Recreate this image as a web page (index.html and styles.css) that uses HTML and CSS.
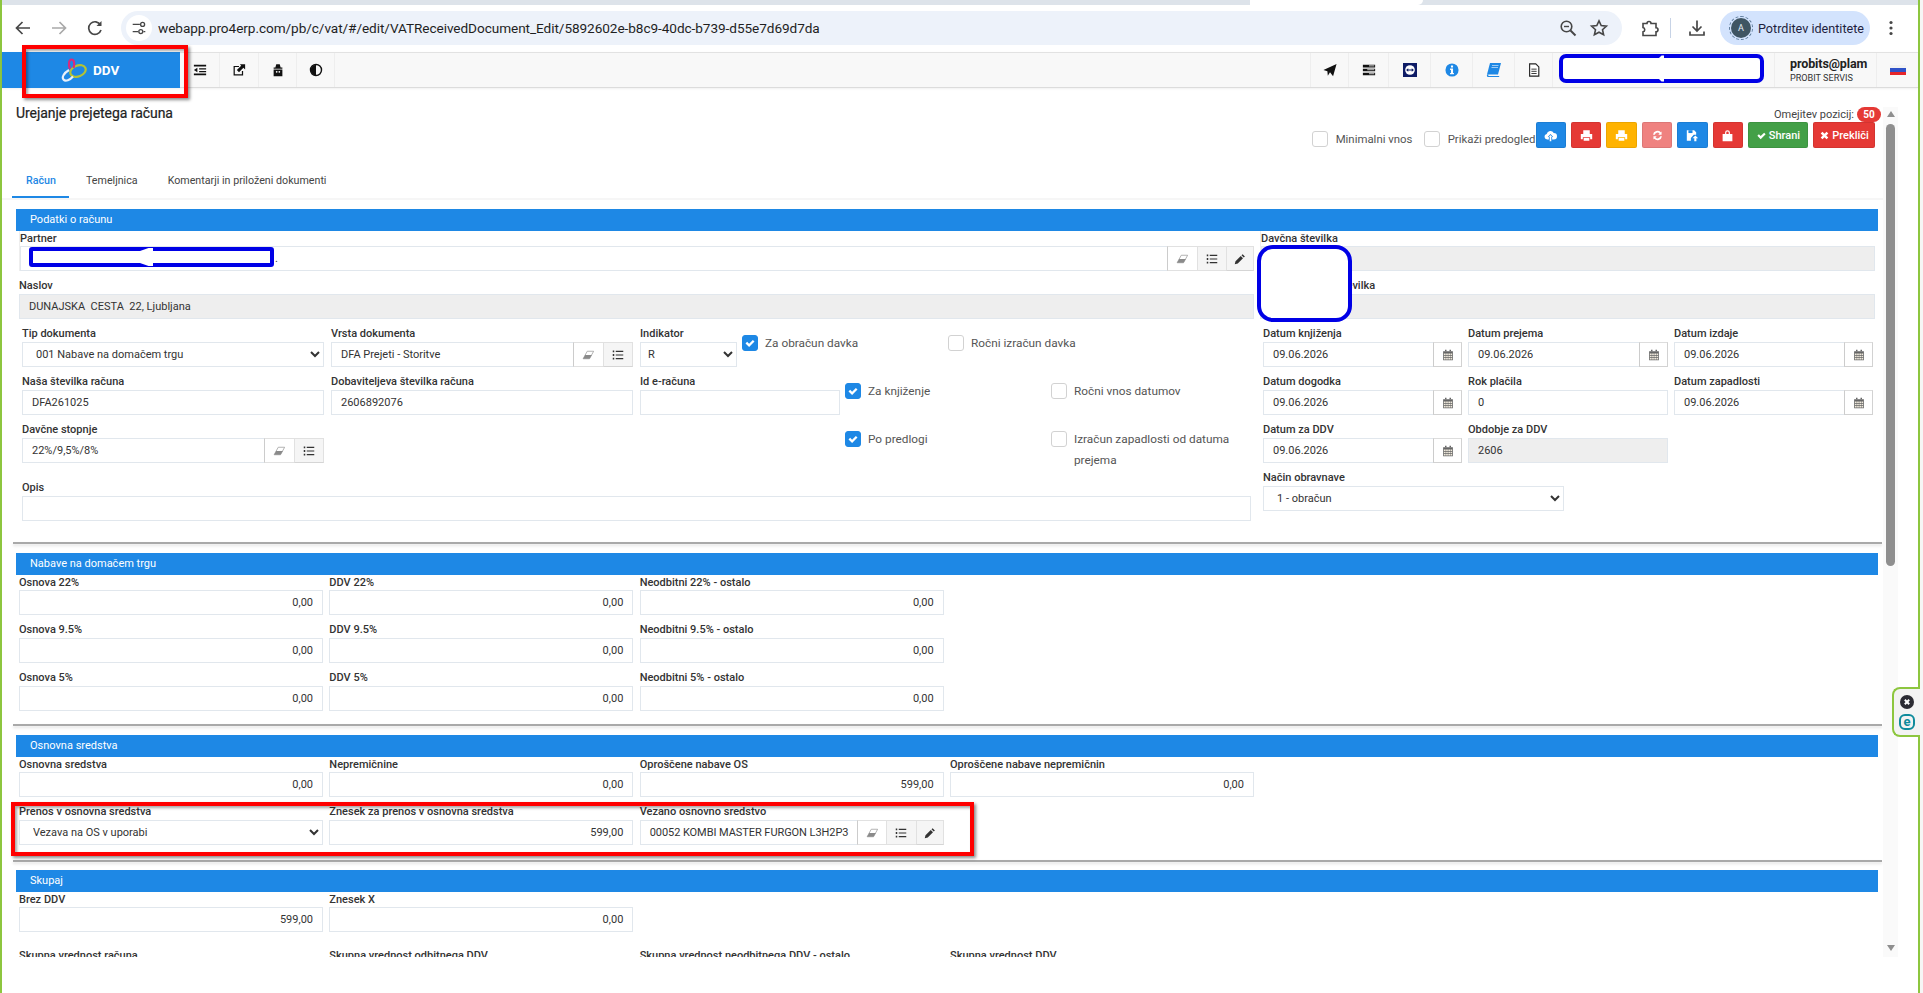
FILE: index.html
```html
<!DOCTYPE html>
<html lang="sl">
<head>
<meta charset="utf-8">
<title>Urejanje prejetega računa</title>
<link rel="stylesheet" href="styles.css">
</head>
<body>
<svg class="defs" width="0" height="0" aria-hidden="true">
  <symbol id="i-eraser" viewBox="0 0 16 16"><path d="M7 3h8.500L10 13H1.500z" fill="#fff" stroke="#9a9a9a"/><path d="M4.200 8h9L10 13H1.500z" fill="#8a8a8a"/></symbol>
  <symbol id="i-list" viewBox="0 0 16 16"><path d="M1 2h2v2.400H1zM5 2.400h10v1.600H5zM1 6.800h2v2.400H1zM5 7.200h10v1.600H5zM1 11.600h2V14H1zM5 12h10v1.600H5z" fill="#333"/></symbol>
  <symbol id="i-pencil" viewBox="0 0 16 16"><path d="M11.500 1.500l3 3-1.500 1.500-3-3zM9 4l3 3-7 7-4 1 1-4z" fill="#333"/></symbol>
  <symbol id="i-cal" viewBox="0 0 16 16"><path d="M4 1h2v2H4zM10 1h2v2h-2z" fill="#666"/><path d="M1.500 3h13v12h-13z" fill="#666"/><path d="M2.500 6h2.400v2H2.500zM5.500 6h2.300v2H5.500zM8.400 6h2.300v2H8.400zM11.300 6h2.200v2h-2.200zM2.500 9h2.400v2H2.500zM5.500 9h2.300v2H5.500zM8.400 9h2.300v2H8.400zM11.300 9h2.200v2h-2.200zM2.500 12h2.400v2H2.500zM5.500 12h2.300v2H5.500zM8.400 12h2.300v2H8.400zM11.300 12h2.200v2h-2.200z" fill="#efe9dc"/></symbol>
  <symbol id="i-cloud" viewBox="0 0 16 16"><path d="M4 13A3.500 3.500 0 0 1 3.300 6.100 4.700 4.700 0 0 1 12 5a4 4 0 0 1 0 8h-2V9.800h1.400L8 6 4.600 9.800H6V13z" fill="#fff"/><path d="M8 7.500l2 2.200H9V15H7V9.700H6z" fill="#fff"/></symbol>
  <symbol id="i-print" viewBox="0 0 16 16"><path d="M4 1.500h8V6H4zM1 6h14v6.500h-2.500V10h-9v2.500H1zM4.500 11h7v3.500h-7z" fill="#fff"/></symbol>
  <symbol id="i-sync" viewBox="0 0 16 16"><path d="M13 3v4H9l1.500-1.500A3.500 3.500 0 0 0 4.600 7H2.500A5.500 5.500 0 0 1 12 4zM3 13V9h4l-1.500 1.500A3.500 3.500 0 0 0 11.400 9h2.100A5.500 5.500 0 0 1 4 12z" fill="#fff"/></symbol>
  <symbol id="i-saveup" viewBox="0 0 16 16"><path d="M1 1.500h9l2.500 2.500v3H9.500L6 11v3.500H1z" fill="#fff"/><path d="M3 1.500h5V5H3z" fill="#1e88e5"/><path d="M11.500 8l3.500 3.500h-2.200V15h-2.600v-3.500H8z" fill="#fff"/></symbol>
  <symbol id="i-lock" viewBox="0 0 16 16"><path d="M5 6V4.500a3 3 0 0 1 6 0V6h3v9H2V6zM6.500 6h3V4.500a1.500 1.500 0 0 0-3 0z" fill="#fff" fill-rule="evenodd"/></symbol>
  <symbol id="i-check" viewBox="0 0 16 16"><path d="M2 8.500l2.200-2.200 2.600 2.600 5-5L14 6.100l-7.200 7.200z" fill="#fff"/></symbol>
  <symbol id="i-times" viewBox="0 0 16 16"><path d="M2.500 5L5 2.500l3 3 3-3L13.500 5l-3 3 3 3-2.500 2.500-3-3-3 3L2.500 11l3-3z" fill="#fff"/></symbol>
</svg>

<div class="frame">
  <div class="strip"><span class="strip-tab"></span></div>
  <div class="browser">
    <div class="nav">
      <svg class="ci" viewBox="0 0 20 20"><path d="M17 10H4M9.500 4L3.500 10l6 6" fill="none" stroke="#474747" stroke-width="1.700"/></svg>
      <svg class="ci" viewBox="0 0 20 20"><path d="M3 10h13M10.500 4l6 6-6 6" fill="none" stroke="#a9a9a9" stroke-width="1.700"/></svg>
      <svg class="ci" viewBox="0 0 20 20"><path d="M15.500 7A6.300 6.300 0 1 0 16 12" fill="none" stroke="#474747" stroke-width="1.700"/><path d="M16.500 3v5h-5z" fill="#474747"/></svg>
    </div>
    <div class="url">
      <span class="site-info"><svg viewBox="0 0 20 20" width="18" height="18"><path d="M3 6h8M15 14h2M3 14h6" stroke="#474747" stroke-width="1.600" fill="none"/><circle cx="14" cy="6" r="2.200" fill="none" stroke="#474747" stroke-width="1.500"/><circle cx="12" cy="14" r="2.200" fill="none" stroke="#474747" stroke-width="1.500"/></svg></span>
      <span class="url-text">webapp.pro4erp.com/pb/c/vat/#/edit/VATReceivedDocument_Edit/5892602e-b8c9-40dc-b739-d55e7d69d7da</span>
      <svg class="ci url-zoom" viewBox="0 0 20 20"><circle cx="8.500" cy="8.500" r="5.300" fill="none" stroke="#474747" stroke-width="1.600"/><path d="M12.500 12.500l5 5" stroke="#474747" stroke-width="2"/><path d="M6 8.500h5" stroke="#474747" stroke-width="1.400"/></svg>
      <svg class="ci url-star" viewBox="0 0 20 20"><path d="M10 2.800l2.200 4.800 5.200.6-3.900 3.500 1.100 5.100L10 14.200l-4.600 2.600 1.100-5.100L2.600 8.200l5.200-.6z" fill="none" stroke="#474747" stroke-width="1.600"/></svg>
    </div>
    <svg class="ci ext" viewBox="0 0 20 20"><path d="M3 5.500h4a2 2 0 0 1 4 0h5v4.200a2 2 0 0 1 0 4V17.500H3v-3.700a2.200 2.200 0 0 0 0-4.300z" fill="none" stroke="#474747" stroke-width="1.600"/></svg>
    <span class="sep"></span>
    <svg class="ci dl" viewBox="0 0 20 20"><path d="M10 2.500V12M5.500 8.500L10 13l4.500-4.500M3 13.500v3.500h14v-3.500" fill="none" stroke="#474747" stroke-width="1.700"/></svg>
    <div class="profile"><span class="avatar">A</span><span>Potrditev identitete</span></div>
    <svg class="ci kebab" viewBox="0 0 20 20"><circle cx="10" cy="4.500" r="1.600" fill="#474747"/><circle cx="10" cy="10" r="1.600" fill="#474747"/><circle cx="10" cy="15.500" r="1.600" fill="#474747"/></svg>
  </div>

  <header class="appbar">
    <div class="brand">
      <svg class="logo" viewBox="0 0 26 24" width="26" height="24"><ellipse cx="17" cy="13" rx="8" ry="5.500" transform="rotate(-22 17 13)" fill="none" stroke="#b5c334" stroke-width="2.200"/><path d="M9 11C7 6 8 1.500 10.500 1.500S14 5 12.500 10" fill="none" stroke="#d92a7e" stroke-width="2.200"/><path d="M8 12C3 15 0.500 19 2.500 21.500S9 22 12 18.500" fill="none" stroke="#e8f1fb" stroke-width="2.200"/></svg>
      <span>DDV</span>
    </div>
    <div class="cell c40"><svg class="ti" viewBox="0 0 16 16"><path d="M1 2h14v2H1zM7 6h8v1.500H7zM7 9h8v1.500H7zM1 12h14v2H1zM5 5.500v5L1 8z" fill="#111"/></svg></div>
    <div class="cell c39"><svg class="ti" viewBox="0 0 16 16"><path d="M12 9v4.500H2.500V4H8" fill="none" stroke="#111" stroke-width="1.400"/><path d="M6 9l6-6M9 1.500h6V7.500l-2-2-5 5-2.500-2.500 5-5z" fill="#111"/></svg></div>
    <div class="cell c38"><svg class="ti" viewBox="0 0 16 16"><path d="M5 5l1-3.500h4L11 5h2v1.500H3V5zM3 7.500h10V15H3z" fill="#111"/><circle cx="6.500" cy="10" r="1" fill="#fff"/><circle cx="9.500" cy="10" r="1" fill="#fff"/></svg></div>
    <div class="cell c38"><svg class="ti" viewBox="0 0 16 16"><circle cx="8" cy="8" r="6.300" fill="none" stroke="#111" stroke-width="1.600"/><path d="M8 2a6 6 0 0 0 0 12z" fill="#111"/></svg></div>
    <div class="grow"></div>
    <div class="cell c39 first"><svg class="ti" viewBox="0 0 16 16"><path d="M15.500 1L11.500 15 8 10.500 5.500 14.500 5 9.500 0.500 8z" fill="#111"/></svg></div>
    <div class="cell c40"><svg class="ti" viewBox="0 0 16 16"><path d="M1 2h14v3H1zM1 6.500h14v3H1zM1 11h14v3H1z" fill="#111"/><path d="M8 3.300h6M6 7.700h8M8 12.300h6" stroke="#fff" stroke-width=".9"/></svg></div>
    <div class="cell c42"><svg class="ti" viewBox="0 0 16 16"><rect width="16" height="16" fill="#0e1c66"/><circle cx="8" cy="8" r="5.500" fill="#fff"/><path d="M3.500 8l2.500-2v1.300h4V6l2.500 2-2.500 2V8.700h-4V10z" fill="#0e1c66"/></svg></div>
    <div class="cell c42"><svg class="ti" viewBox="0 0 16 16"><circle cx="8" cy="8" r="7.500" fill="#1e88e5"/><path d="M6.800 2.800h2.400V5H6.800zM5.800 6.400h3.400v5h1v1.500H5.800v-1.500h1V7.900h-1z" fill="#fff"/></svg></div>
    <div class="cell c42"><svg class="ti book" viewBox="0 0 16 16"><path d="M4 1h11L12 12.500H1z" fill="#1e88e5"/><path d="M1 12.500c-.5 2 .5 2.500 1.500 2.500h10.300l.7-1H3c-1 0-1-1 -.3-1.500z" fill="#1e88e5"/><path d="M6 3.500h6.500M5.500 5.500H12" stroke="#bfdcf7" stroke-width=".8"/></svg></div>
    <div class="cell c38"><svg class="ti" viewBox="0 0 16 16"><path d="M3 1h7l3.500 3.500V15H3z" fill="#fff" stroke="#222" stroke-width="1.300"/><path d="M5 7h6M5 9.500h6M5 12h6" stroke="#222" stroke-width="1"/></svg></div>
    <div class="cell c222"></div>
    <div class="cell user"><strong>probits@plam</strong><small>PROBIT SERVIS</small></div>
    <div class="flag-cell"><span class="flag"></span></div>
  </header>

  <div class="workspace">
    <main class="content">
      <div class="head">
        <h1>Urejanje prejetega računa</h1>
        <div class="head-right">
          <div class="limit"><span>Omejitev pozicij:</span><b class="badge">50</b></div>
          <div class="controls">
            <label class="hc"><span class="box"></span><span>Minimalni vnos</span></label>
            <label class="hc hc2"><span class="box"></span><span>Prikaži predogled</span></label>
            <div class="btns">
              <button class="btn blue"><svg class="bi"><use href="#i-cloud"/></svg></button>
              <button class="btn red"><svg class="bi"><use href="#i-print"/></svg></button>
              <button class="btn amber"><svg class="bi"><use href="#i-print"/></svg></button>
              <button class="btn salmon"><svg class="bi"><use href="#i-sync"/></svg></button>
              <button class="btn blue"><svg class="bi"><use href="#i-saveup"/></svg></button>
              <button class="btn red"><svg class="bi"><use href="#i-lock"/></svg></button>
              <button class="btn green wide"><svg class="bs"><use href="#i-check"/></svg>Shrani</button>
              <button class="btn red wider"><svg class="bs"><use href="#i-times"/></svg>Prekliči</button>
            </div>
          </div>
        </div>
      </div>

      <nav class="tabs">
        <a class="tab active">Račun</a>
        <a class="tab">Temeljnica</a>
        <a class="tab">Komentarji in priloženi dokumenti</a>
      </nav>

      <section class="section s1">
        <div class="bar">Podatki o računu</div>
        <div class="top">
          <div class="top-left">
            <div class="f first">
              <div class="lb">Partner</div>
              <div class="group"><div class="in partner">.</div>
                <span class="add plain"><svg class="ai"><use href="#i-eraser"/></svg></span><span class="add"><svg class="ai"><use href="#i-list"/></svg></span><span class="add last pen"><svg class="ai"><use href="#i-pencil"/></svg></span></div>
            </div>
            <div class="f">
              <div class="lb">Naslov</div>
              <div class="in ro">DUNAJSKA&nbsp; CESTA&nbsp; 22, Ljubljana</div>
            </div>
            <div class="row">
              <div class="f w302"><div class="lb">Tip dokumenta</div>
                <select class="sel"><option>001 Nabave na domačem trgu</option></select></div>
              <div class="f w302"><div class="lb">Vrsta dokumenta</div>
                <div class="group"><div class="in">DFA Prejeti - Storitve</div><span class="add plain"><svg class="ai"><use href="#i-eraser"/></svg></span><span class="add last"><svg class="ai"><use href="#i-list"/></svg></span></div></div>
              <div class="f w97"><div class="lb">Indikator</div>
                <select class="sel sel-s"><option>R</option></select></div>
              <label class="ck"><span class="box on"><svg viewBox="0 0 16 16"><use href="#i-check"/></svg></span><span>Za obračun davka</span></label>
              <label class="ck"><span class="box"></span><span>Ročni izračun davka</span></label>
            </div>
            <div class="row">
              <div class="f w302"><div class="lb">Naša številka računa</div><div class="in">DFA261025</div></div>
              <div class="f w302"><div class="lb">Dobaviteljeva številka računa</div><div class="in">2606892076</div></div>
              <div class="f w200"><div class="lb">Id e-računa</div><div class="in"></div></div>
              <label class="ck"><span class="box on"><svg viewBox="0 0 16 16"><use href="#i-check"/></svg></span><span>Za knjiženje</span></label>
              <label class="ck"><span class="box"></span><span>Ročni vnos datumov</span></label>
            </div>
            <div class="row">
              <div class="f w302"><div class="lb">Davčne stopnje</div>
                <div class="group"><div class="in">22%/9,5%/8%</div><span class="add plain"><svg class="ai"><use href="#i-eraser"/></svg></span><span class="add last"><svg class="ai"><use href="#i-list"/></svg></span></div></div>
              <div class="f w302"></div>
              <div class="f w200"></div>
              <label class="ck"><span class="box on"><svg viewBox="0 0 16 16"><use href="#i-check"/></svg></span><span>Po predlogi</span></label>
              <label class="ck"><span class="box"></span><span>Izračun zapadlosti od datuma prejema</span></label>
            </div>
            <div class="f opis"><div class="lb">Opis</div><div class="in"></div></div>
          </div>
          <div class="top-right">
            <div class="f first"><div class="lb">Davčna številka</div><div class="in ro"></div></div>
            <div class="f"><div class="lb">Identifikacijska številka</div><div class="in ro"></div></div>
            <div class="row dates">
              <div class="f d1"><div class="lb">Datum knjiženja</div><div class="group"><div class="in">09.06.2026</div><span class="add cal"><svg class="ai"><use href="#i-cal"/></svg></span></div></div>
              <div class="f d2"><div class="lb">Datum prejema</div><div class="group"><div class="in">09.06.2026</div><span class="add cal"><svg class="ai"><use href="#i-cal"/></svg></span></div></div>
              <div class="f d3"><div class="lb">Datum izdaje</div><div class="group"><div class="in">09.06.2026</div><span class="add cal"><svg class="ai"><use href="#i-cal"/></svg></span></div></div>
            </div>
            <div class="row dates">
              <div class="f d1"><div class="lb">Datum dogodka</div><div class="group"><div class="in">09.06.2026</div><span class="add cal"><svg class="ai"><use href="#i-cal"/></svg></span></div></div>
              <div class="f d2"><div class="lb">Rok plačila</div><div class="in">0</div></div>
              <div class="f d3"><div class="lb">Datum zapadlosti</div><div class="group"><div class="in">09.06.2026</div><span class="add cal"><svg class="ai"><use href="#i-cal"/></svg></span></div></div>
            </div>
            <div class="row dates">
              <div class="f d1"><div class="lb">Datum za DDV</div><div class="group"><div class="in">09.06.2026</div><span class="add cal"><svg class="ai"><use href="#i-cal"/></svg></span></div></div>
              <div class="f d2"><div class="lb">Obdobje za DDV</div><div class="in ro">2606</div></div>
            </div>
            <div class="row dates">
              <div class="f nacin"><div class="lb">Način obravnave</div><select class="sel"><option>1 - obračun</option></select></div>
            </div>
          </div>
        </div>
      </section>
      <hr class="rule">

      <section class="section s2">
        <div class="bar">Nabave na domačem trgu</div>
        <div class="grid first-row">
          <div class="f"><div class="lb">Osnova 22%</div><div class="in num">0,00</div></div>
          <div class="f"><div class="lb">DDV 22%</div><div class="in num">0,00</div></div>
          <div class="f"><div class="lb">Neodbitni 22% - ostalo</div><div class="in num">0,00</div></div>
        </div>
        <div class="grid">
          <div class="f"><div class="lb">Osnova 9.5%</div><div class="in num">0,00</div></div>
          <div class="f"><div class="lb">DDV 9.5%</div><div class="in num">0,00</div></div>
          <div class="f"><div class="lb">Neodbitni 9.5% - ostalo</div><div class="in num">0,00</div></div>
        </div>
        <div class="grid">
          <div class="f"><div class="lb">Osnova 5%</div><div class="in num">0,00</div></div>
          <div class="f"><div class="lb">DDV 5%</div><div class="in num">0,00</div></div>
          <div class="f"><div class="lb">Neodbitni 5% - ostalo</div><div class="in num">0,00</div></div>
        </div>
      </section>
      <hr class="rule">

      <section class="section s3">
        <div class="bar">Osnovna sredstva</div>
        <div class="grid first-row">
          <div class="f"><div class="lb">Osnovna sredstva</div><div class="in num">0,00</div></div>
          <div class="f"><div class="lb">Nepremičnine</div><div class="in num">0,00</div></div>
          <div class="f"><div class="lb">Oproščene nabave OS</div><div class="in num">599,00</div></div>
          <div class="f"><div class="lb">Oproščene nabave nepremičnin</div><div class="in num">0,00</div></div>
        </div>
        <div class="grid">
          <div class="f"><div class="lb">Prenos v osnovna sredstva</div><select class="sel sel-w"><option>Vezava na OS v uporabi</option></select></div>
          <div class="f"><div class="lb">Znesek za prenos v osnovna sredstva</div><div class="in num">599,00</div></div>
          <div class="f"><div class="lb">Vezano osnovno sredstvo</div>
            <div class="group"><div class="in tight">00052 KOMBI MASTER FURGON L3H2P3</div><span class="add plain"><svg class="ai"><use href="#i-eraser"/></svg></span><span class="add"><svg class="ai"><use href="#i-list"/></svg></span><span class="add last pen"><svg class="ai"><use href="#i-pencil"/></svg></span></div></div>
        </div>
      </section>
      <hr class="rule rule3">

      <section class="section s4">
        <div class="bar">Skupaj</div>
        <div class="grid first-row">
          <div class="f"><div class="lb">Brez DDV</div><div class="in num">599,00</div></div>
          <div class="f"><div class="lb">Znesek X</div><div class="in num">0,00</div></div>
        </div>
        <div class="grid after">
          <div class="f"><div class="lb">Skupna vrednost računa</div></div>
          <div class="f"><div class="lb">Skupna vrednost odbitnega DDV</div></div>
          <div class="f"><div class="lb">Skupna vrednost neodbitnega DDV - ostalo</div></div>
          <div class="f"><div class="lb">Skupna vrednost DDV</div></div>
        </div>
      </section>
    </main>
    <aside class="scroll">
      <span class="arrow up"></span>
      <span class="thumb"></span>
      <span class="arrow down"></span>
    </aside>
  </div>
</div>

<div class="eset">
  <svg viewBox="0 0 16 16" width="14" height="14"><circle cx="8" cy="8" r="8" fill="#2b2b33"/><path d="M4.700 6.300L6.300 4.700 8 6.400l1.700-1.700 1.600 1.600L9.600 8l1.700 1.700-1.600 1.600L8 9.600l-1.700 1.700-1.600-1.600L6.400 8z" fill="#fff"/></svg>
  <span class="eset-e">e</span>
</div>

<div class="mark red-frame brandmark"></div>
<div class="mark red-frame rowmark"></div>
<div class="mark blue-box usermask"><i class="wedge"></i></div>
<div class="mark blue-box partnermask"><i class="wedge"></i></div>
<div class="mark blue-box taxmask"></div>
</body>
</html>
```
FILE: styles.css
```css
* { box-sizing: border-box; }
html, body { margin: 0; padding: 0; }
body {
  position: relative;
  width: 1923px;
  height: 993px;
  overflow: hidden;
  background: #f6f6f6;
  font-family: Roboto, "Liberation Sans", sans-serif;
  font-size: 11px;
  color: #333;
}
.defs { position: absolute; }
.frame {
  width: 1920px;
  height: 993px;
  background: #fff;
  border-left: 2px solid #8dc63f;
  border-right: 2px solid #8dc63f;
  display: flex;
  flex-direction: column;
}

/* browser chrome */
.strip { height: 5px; background: #dde3ea; position: relative; flex: none; }
.strip-tab { position: absolute; left: 1248px; width: 173px; top: 0; height: 5px; background: #fff; border-bottom-right-radius: 6px; }
.browser { height: 47px; flex: none; background: #fff; display: flex; align-items: center; padding-bottom: 1px; }
.nav { display: flex; width: 119px; padding-left: 11px; gap: 16px; flex: none; }
.ci { width: 20px; height: 20px; flex: none; }
.url { width: 1501px; height: 34px; flex: none; border-radius: 17px; background: #edf2fa; display: flex; align-items: center; }
.site-info { width: 26px; height: 26px; margin-left: 5px; border-radius: 50%; background: #fff; display: flex; align-items: center; justify-content: center; }
.url-text { margin-left: 6px; font-size: 13.600px; color: #1f1f1f; flex: 1; white-space: nowrap; letter-spacing: -.06px; }
.url-zoom { margin-right: 11px; }
.url-star { margin-right: 13px; }
.ext { margin-left: 18px; }
.sep { width: 1px; height: 20px; background: #c7d3e6; margin-left: 10px; flex: none; }
.dl { margin-left: 16px; }
.profile { margin-left: 13px; width: 150px; height: 34px; flex: none; border-radius: 17px; background: #d3e3fd; display: flex; align-items: center; font-size: 12.600px; color: #1f1f3f; white-space: nowrap; }
.avatar { width: 20px; height: 20px; margin: 0 7px 0 11px; border-radius: 50%; background: #3f5563; color: #e8eef5; font-size: 9px; display: flex; align-items: center; justify-content: center; outline: 1px dashed #5f7d9c; outline-offset: 1px; flex: none; }
.kebab { margin-left: 11px; }

/* app bar */
.appbar { height: 36px; flex: none; display: flex; align-items: stretch; background: #f8f8f8; border-top: 1px solid #e2e2e2; border-bottom: 1px solid #dcdcdc; box-shadow: 0 1px 2px rgba(0,0,0,.06); }
.brand { width: 178px; margin: -1px 0; background: #1e88e5; color: #fff; display: flex; align-items: center; padding-left: 59px; gap: 6px; font-size: 13.500px; font-weight: 700; }
.cell { flex: none; border-right: 1px solid #eeeeee; display: flex; align-items: center; justify-content: center; }
.first { border-left: 1px solid #eeeeee; }
.c38 { width: 38px; }
.c39 { width: 39px; }
.c40 { width: 40px; }
.c42 { width: 42px; }
.c222 { width: 222px; }
.grow { flex: 1; }
.ti { width: 14px; height: 14px; }
.book { width: 16px; height: 16px; }
.user { width: 102px; flex-direction: column; align-items: flex-start; justify-content: center; padding-left: 15px; }
.user strong { font-size: 12.500px; font-weight: 700; color: #222; line-height: 16px; white-space: nowrap; letter-spacing: -.1px; }
.user small { font-size: 9.100px; color: #333; line-height: 13px; white-space: nowrap; }
.flag-cell { width: 41px; display: flex; align-items: center; padding-left: 13px; }
.flag { width: 16px; height: 10px; background: linear-gradient(#f2f2f2 33%, #2f52c8 33% 66%, #e5252a 66%); }

/* workspace */
.workspace { height: 869px; flex: none; display: flex; overflow: hidden; }
.content { width: 1881px; flex: none; overflow: hidden; }
.scroll { width: 15px; margin-top: 19px; height: 850px; background: #fafafa; position: relative; flex: none; display: flex; flex-direction: column; align-items: center; }
.arrow { width: 0; height: 0; border-left: 4.500px solid transparent; border-right: 4.500px solid transparent; }
.up { margin-top: 4px; border-bottom: 6px solid #8f8f8f; }
.down { margin-top: 379px; border-top: 6px solid #8f8f8f; }
.thumb { width: 9px; height: 442px; margin-top: 7px; border-radius: 5px; background: #8f8f8f; }

/* header of page */
.head { height: 66px; display: flex; justify-content: space-between; }
h1 { margin: 17px 0 0 14px; font-size: 14px; line-height: 17px; font-weight: 400; color: #222; white-space: nowrap; letter-spacing: -.05px; -webkit-text-stroke: .2px #222; }
.head-right { width: 600px; display: flex; flex-direction: column; align-items: flex-end; padding-right: 8px; }
.limit { margin-top: 19px; height: 15px; margin-right: -6px; display: flex; align-items: center; font-size: 11px; color: #444; gap: 3px; }
.badge { width: 24px; height: 15px; border-radius: 8px; background: #e53935; color: #fff; font-size: 10px; font-weight: 700; text-align: center; line-height: 15px; }
.controls { display: flex; align-items: flex-start; height: 26px; }
.hc { display: flex; align-items: center; gap: 8px; margin-top: 9px; width: 112px; font-size: 11.400px; color: #555; white-space: nowrap; }
.hc2 { width: 112px; }
.box { width: 16px; height: 16px; flex: none; border: 1px solid #d2d2d2; border-radius: 3px; background: #fff; display: inline-flex; align-items: center; justify-content: center; }
.box.on { background: #1e88e5; border-color: #1e88e5; }
.box.on svg { width: 12px; height: 12px; }
.btns { display: flex; gap: 5px; position: relative; }
.btn { width: 30.400px; height: 26px; padding: 0; border: 1px solid rgba(0,0,0,.08); border-radius: 2px; color: #fff; font-family: inherit; font-size: 11px; font-weight: 500; display: flex; align-items: center; justify-content: center; white-space: nowrap; }
.blue { background: #1e88e5; }
.red { background: #e53935; }
.amber { background: #ffb300; }
.salmon { background: #ef8280; }
.green { background: #43a047; }
.wide { width: 60px; }
.wider { width: 62px; }
.bi { width: 13px; height: 13px; }
.bs { width: 11px; height: 11px; margin-right: 2px; }

/* tabs */
.tabs { height: 46px; display: flex; padding: 11px 0 0 10px; border-bottom: 2px solid #f6f6f6; }
.tab { height: 33px; padding: 8px 0 0 0; font-size: 10.700px; line-height: 15px; color: #444; white-space: nowrap; margin-right: 30px; border-bottom: 2px solid transparent; }
.tab.active { color: #1e88e5; font-weight: 500; width: 57px; padding-left: 14px; margin-right: 17px; border-bottom-color: #1e88e5; }

/* sections */
.section { margin-left: 14px; width: 1862px; }
.s1 { margin-top: 9px; padding-bottom: 15px; }
.s2 { padding-bottom: 7px; }
.s3 { padding-bottom: 9px; }
.bar { height: 22px; background: #1e88e5; color: #fff; font-size: 11px; line-height: 22px; padding-left: 14px; white-space: nowrap; }
.rule { height: 2px; margin: 0 0 9px 11px; width: 1869px; border: 0; background: #a9a9a9; box-shadow: 0 2px 3px rgba(0,0,0,.12); }
.rule3 { margin-bottom: 8px; }

.top { display: flex; }
.top-left { width: 1241px; padding: 0 3px; }
.top-right { width: 615px; margin-left: 3px; }
.f { display: flex; flex-direction: column; min-width: 0; margin-bottom: 6px; }
.lb { height: 17px; font-size: 11px; line-height: 17px; font-weight: 500; color: #333; white-space: nowrap; }
.first > .lb { height: 15px; line-height: 15px; }
.first-row .lb { height: 15px; line-height: 15px; }
.in { height: 25px; flex: 1 1 auto; min-width: 0; border: 1px solid #e1e7ed; background: #fff; padding: 0 9px; font-size: 11px; line-height: 23px; color: #333; white-space: nowrap; overflow: hidden; }
.f > .in { flex: none; }
.ro { background: #eee; }
.num { text-align: right; }
.partner { padding-left: 254px; }
.group { display: flex; height: 25px; }
.add { width: 30.500px; height: 25px; flex: none; margin-left: -1px; display: flex; align-items: center; justify-content: center; background: #f5f5f5; border: 1px solid #e1e1e1; }
.add.plain { background: #fff; border-left-color: #ccc; }
.add.pen { width: 28px; }
.add.cal { width: 29px; background: #fff; border-color: #ddd #d2d2d2 #d2d2d2 #ccc; }
.add.last { border-bottom-color: #d5d5d5; }
.ai { width: 12px; height: 12px; }
.tight { padding: 0 4px 0 9px; letter-spacing: -.06px; }

.row { display: flex; gap: 7px; padding-left: 3px; }
.row > .f { flex: none; }
.w302 { width: 302px; }
.w97 { width: 97px; }
.w200 { width: 200px; }
.sel { height: 25px; width: 100%; border: 1px solid #e1e7ed; background: #fff; padding: 0 0 0 9px; border-radius: 0; font-family: inherit; font-size: 11px; color: #333; outline: 0; }
.sel-s { padding-left: 3px; }
.ck { height: 42px; width: 199px; margin-left: -2px; margin-right: 2px; padding-top: 10px; display: flex; align-items: flex-start; gap: 7px; font-size: 11.800px; line-height: 21px; color: #555; flex: none; }
.ck span:last-child { margin-top: -2px; width: 165px; }
.opis { margin: 10px 3px 6px 3px; }

.dates { gap: 6px; }
.d1 { width: 199px; }
.d2 { width: 200px; }
.d3 { width: 199px; }
.nacin { width: 301px; }

.grid { display: grid; grid-template-columns: repeat(4, 304px); column-gap: 6.330px; padding-left: 3px; }
.after { margin-top: 9px; }

/* annotations over the screenshot */
.mark { position: absolute; }
.red-frame { border: 4px solid #f00; box-shadow: 2px 2px 3px rgba(0,0,0,.45), inset 2px 2px 3px rgba(0,0,0,.35); }
.brandmark { left: 22px; top: 45px; width: 166px; height: 53px; }
.rowmark { left: 11px; top: 802px; width: 963px; height: 54px; }
.blue-box { border: 4px solid #0000e6; background: #fff; }
.usermask { left: 1559px; top: 54px; width: 205px; height: 29px; border-radius: 7px; }
.partnermask { left: 29px; top: 247px; width: 245px; height: 20px; border-radius: 3px; }
.taxmask { left: 1257px; top: 245px; width: 95px; height: 77px; border-radius: 16px; }
.wedge { position: absolute; top: -4px; bottom: -4px; width: 30px; background: #fff; clip-path: polygon(0 50%, 85% 5%, 100% 5%, 100% 95%, 85% 95%); }
.usermask .wedge { left: 85px; width: 16px; }
.partnermask .wedge { left: 90px; }

.eset { position: absolute; left: 1892px; top: 687px; width: 28px; height: 50px; background: #f3f3f3; border: 2px solid #8dc63f; border-right: 0; border-radius: 8px 0 0 8px; display: flex; flex-direction: column; align-items: center; padding-top: 6px; gap: 5px; }
.eset-e { width: 16px; height: 16px; border: 2px solid #0f8b9c; border-radius: 6px; color: #0f8b9c; font-size: 13px; font-weight: 700; line-height: 11px; text-align: center; }
```
